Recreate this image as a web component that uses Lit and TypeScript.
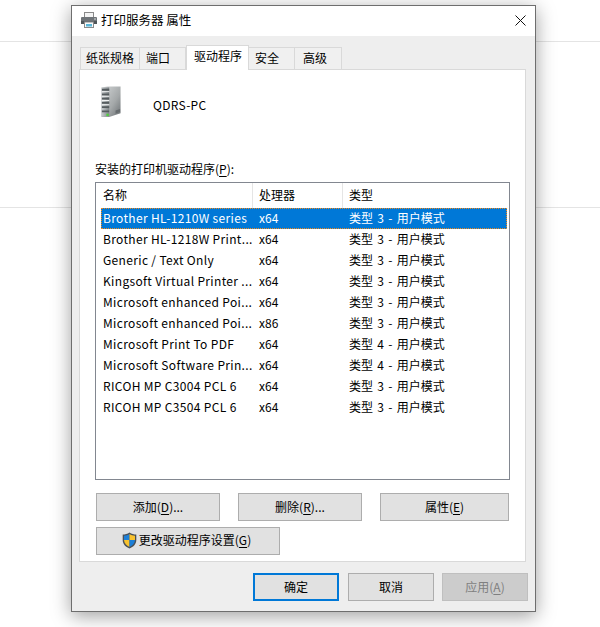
import { LitElement, html, css, svg } from "lit";
import { customElement } from "lit/decorators.js";

const rows: [string, string, string][] = [
  ["Brother HL-1210W series", "x64", "类型 3 - 用户模式"],
  ["Brother HL-1218W Print...", "x64", "类型 3 - 用户模式"],
  ["Generic / Text Only", "x64", "类型 3 - 用户模式"],
  ["Kingsoft Virtual Printer ...", "x64", "类型 3 - 用户模式"],
  ["Microsoft enhanced Poi...", "x64", "类型 3 - 用户模式"],
  ["Microsoft enhanced Poi...", "x86", "类型 3 - 用户模式"],
  ["Microsoft Print To PDF", "x64", "类型 4 - 用户模式"],
  ["Microsoft Software Prin...", "x64", "类型 4 - 用户模式"],
  ["RICOH MP C3004 PCL 6", "x64", "类型 3 - 用户模式"],
  ["RICOH MP C3504 PCL 6", "x64", "类型 3 - 用户模式"],
];

const printerIcon = svg`<svg width="18" height="18" viewBox="0 0 18 18">
  <rect x="4.500" y="1.500" width="9" height="5" fill="#f4f4f4" stroke="#8a8a8a"/>
  <rect x="1" y="6" width="16" height="7" rx="1" fill="#6f7478"/>
  <rect x="1" y="10" width="16" height="3" fill="#50565a"/>
  <rect x="4.500" y="11" width="9" height="5.500" fill="#fafafa" stroke="#8a8a8a"/>
  <rect x="6" y="13" width="6" height="2.500" fill="#58b6d8"/>
  <rect x="14" y="7.500" width="2" height="1" fill="#cfd3d6"/>
</svg>`;

const serverIcon = svg`<svg class="server" width="20" height="31" viewBox="0 0 22 33" preserveAspectRatio="none">
  <defs>
    <linearGradient id="srvf" x1="0" x2="1" y1="0" y2="0"><stop offset="0" stop-color="#c9cdcf"/><stop offset="1" stop-color="#7f8588"/></linearGradient>
    <linearGradient id="srvs" x1="0" x2="1" y1="0" y2="1"><stop offset="0" stop-color="#d4d7d8"/><stop offset=".6" stop-color="#a4a8a9"/><stop offset="1" stop-color="#6a6f72"/></linearGradient>
  </defs>
  <path d="M0.500 1.500 L7 0.500 L21.500 0.500 V29 L9 33 H0.500 Z" fill="url(#srvs)"/>
  <path d="M0.500 1.500 H9 V32.500 H0.500 Z" fill="url(#srvf)"/>
  <path d="M1 3h8v2H1zM1 8h8v2H1zM1 12.500h8v2H1zM1 17h8v2H1zM1 21.500h8v2H1zM1 26h8v2H1z" fill="#565c5f"/>
  <path d="M1 5.500h8v1H1zM1 10.500h8v1H1zM1 15h8v1H1zM1 19.500h8v1H1z" fill="#f2f3f3"/>
  <rect x="6" y="29.500" width="2.500" height="2.500" fill="#4fd13c"/>
  <path d="M16 26l5-1.500v3l-5 2z" fill="#666b6e"/>
</svg>`;

const shieldIcon = svg`<svg width="15" height="17" viewBox="0 0 15 17">
  <path d="M7.500 0.500 C5.500 2 3 2.600 0.700 2.600 V8 C0.700 12 3.500 15 7.500 16.500 C11.500 15 14.300 12 14.300 8 V2.600 C12 2.600 9.500 2 7.500 0.500Z" fill="#4a5057"/>
  <path d="M7.500 2 C6 3 4 3.600 2 3.700 V8 H7.500Z" fill="#1c7fd8"/>
  <path d="M7.500 2 C9 3 11 3.600 13 3.700 V8 H7.500Z" fill="#f8c22e"/>
  <path d="M2 8 H7.500 V15 C4.500 13.700 2.200 11.300 2 8Z" fill="#f8c22e"/>
  <path d="M13 8 H7.500 V15 C10.500 13.700 12.800 11.300 13 8Z" fill="#1c7fd8"/>
</svg>`;

const closeIcon = svg`<svg width="11" height="11" viewBox="0 0 11 11"><path d="M0.500 0.500 L10.500 10.500 M10.500 0.500 L0.500 10.500" stroke="#111" stroke-width="1" fill="none"/></svg>`;

@customElement("app-root")
export class AppRoot extends LitElement {
  static styles = css`
    :host {
      display: block;
      position: relative;
      width: 600px;
      height: 627px;
      overflow: hidden;
      background: #fff;
      font-family: "Noto Sans CJK SC", "Noto Sans", sans-serif;
      font-size: 12px;
      color: #000;
      padding: 5px 0 0 71px;
      box-sizing: border-box;
    }
    .bgline { position: absolute; left: 0; right: 0; height: 1px; background: #e4e4e4; }
    .l1 { top: 41px; }
    .l2 { top: 207px; }
    .window {
      position: relative;
      width: 465px;
      height: 607px;
      box-sizing: border-box;
      border: 1px solid #6e6e6e;
      background: #eeeeee;
      box-shadow: 0 4px 18px rgba(0, 0, 0, 0.38);
      display: flex;
      flex-direction: column;
    }
    .title {
      height: 30px;
      box-sizing: border-box;
      flex: none;
      background: #fff;
      display: flex;
      align-items: center;
      padding: 0 9px 2px 8px;
      font-size: 12.500px;
    }
    .title svg { display: block; }
    .title .name { margin-left: 3px; flex: 1; margin-top: -2px; }
    .tabs {
      flex: none;
      display: flex;
      align-items: flex-end;
      height: 33px;
      padding-left: 8px;
      position: relative;
      z-index: 1;
    }
    .tab {
      height: 22px;
      box-sizing: border-box;
      border: 1px solid #d9d9d9;
      border-bottom: none;
      border-left: none;
      background: #f0f0f0;
      display: flex;
      align-items: center;
      padding: 0 0 2px 6px;
    }
    .tab:first-child { border-left: 1px solid #d9d9d9; width: 60px; padding-left: 5px; }
    .t46 { width: 46px; }
    .t47 { width: 47px; padding-left: 8px; }
    .tab.active {
      width: 63px;
      height: 25px;
      background: #fff;
      border-left: 1px solid #d9d9d9;
      margin-bottom: -1px;
      padding-left: 7px;
      padding-bottom: 5px;
    }
    .panel {
      flex: none;
      margin: 0 9px 0 7px;
      height: 493px;
      box-sizing: border-box;
      border: 1px solid #d9d9d9;
      background: #fff;
      padding: 15px 15px 0 15px;
      display: flex;
      flex-direction: column;
    }
    .host-row { display: flex; align-items: center; height: 38px; padding-left: 6px; }
    .server { margin-bottom: 5px; }
    .pc { margin-left: 32px; letter-spacing: 0.3px; }
    .caption { margin-top: 37px; height: 18px; line-height: 18px; }
    u { text-underline-offset: 2px; }
    .list {
      margin-top: 4px;
      width: 415px;
      height: 298px;
      box-sizing: border-box;
      border: 1px solid #828790;
      padding: 0 2px 0 5px;
      flex: none;
    }
    .row {
      display: grid;
      grid-template-columns: 151px 90px 1fr;
      height: 21px;
      align-items: center;
      white-space: nowrap;
    }
    .row > span { padding: 0 0 2px 2px; }
    .name-cell { letter-spacing: 0.34px; }
    .type-cell { word-spacing: 1.600px; }
    .head { height: 25px; }
    .head > span { height: 25px; line-height: 24px; box-sizing: border-box; padding-bottom: 0; }
    .head > span + span { border-left: 1px solid #e5e5e5; padding-left: 6px; }
    .cell2 { padding-left: 7px !important; }
    .row.sel {
      background: #0078d7;
      color: #fff;
      outline: 1px dotted #f08a1d;
      outline-offset: -1px;
    }
    .actions { display: flex; gap: 18px; margin-top: 13px; margin-left: 1px; }
    .btn {
      box-sizing: border-box;
      height: 28px;
      border: 1px solid #adadad;
      background: #e1e1e1;
      display: flex;
      align-items: center;
      justify-content: center;
      color: #000;
      padding-bottom: 2px;
    }
    .w124 { width: 124px; }
    .w129 { width: 129px; }
    .change { width: 184px; margin: 6px 0 0 1px; padding-bottom: 4px; }
    .change svg { margin: 2px 2px 0 -3px; }
    .footer {
      flex: none;
      display: flex;
      justify-content: flex-end;
      padding: 11px 7px 0 0;
    }
    .footer .btn { width: 86px; }
    .footer .btn + .btn { margin-left: 8px; }
    .btn.primary { border: 2px solid #0078d7; margin-right: 1px; }
    .btn.disabled { background: #cccccc; color: #7f7f7f; border-color: #bfbfbf; }
  `;

  render() {
    return html`
      <div class="bgline l1"></div>
      <div class="bgline l2"></div>
      <div class="window">
        <div class="title">
          ${printerIcon}
          <span class="name">打印服务器 属性</span>
          ${closeIcon}
        </div>
        <div class="tabs">
          <div class="tab">纸张规格</div>
          <div class="tab t46">端口</div>
          <div class="tab active">驱动程序</div>
          <div class="tab t46">安全</div>
          <div class="tab t47">高级</div>
        </div>
        <div class="panel">
          <div class="host-row">
            ${serverIcon}
            <span class="pc">QDRS-PC</span>
          </div>
          <div class="caption">安装的打印机驱动程序(<u>P</u>):</div>
          <div class="list">
            <div class="row head">
              <span>名称</span><span>处理器</span><span>类型</span>
            </div>
            ${rows.map(
              (r, i) => html`<div class="row ${i === 0 ? "sel" : ""}">
                <span class="name-cell">${r[0]}</span><span class="cell2">${r[1]}</span><span class="cell2 type-cell">${r[2]}</span>
              </div>`
            )}
          </div>
          <div class="actions">
            <div class="btn w124"><span>添加(<u>D</u>)...</span></div>
            <div class="btn w124"><span>删除(<u>R</u>)...</span></div>
            <div class="btn w129"><span>属性(<u>E</u>)</span></div>
          </div>
          <div class="btn change">${shieldIcon}<span>更改驱动程序设置(<u>G</u>)</span></div>
        </div>
        <div class="footer">
          <div class="btn primary">确定</div>
          <div class="btn">取消</div>
          <div class="btn disabled"><span>应用(<u>A</u>)</span></div>
        </div>
      </div>
    `;
  }
}
